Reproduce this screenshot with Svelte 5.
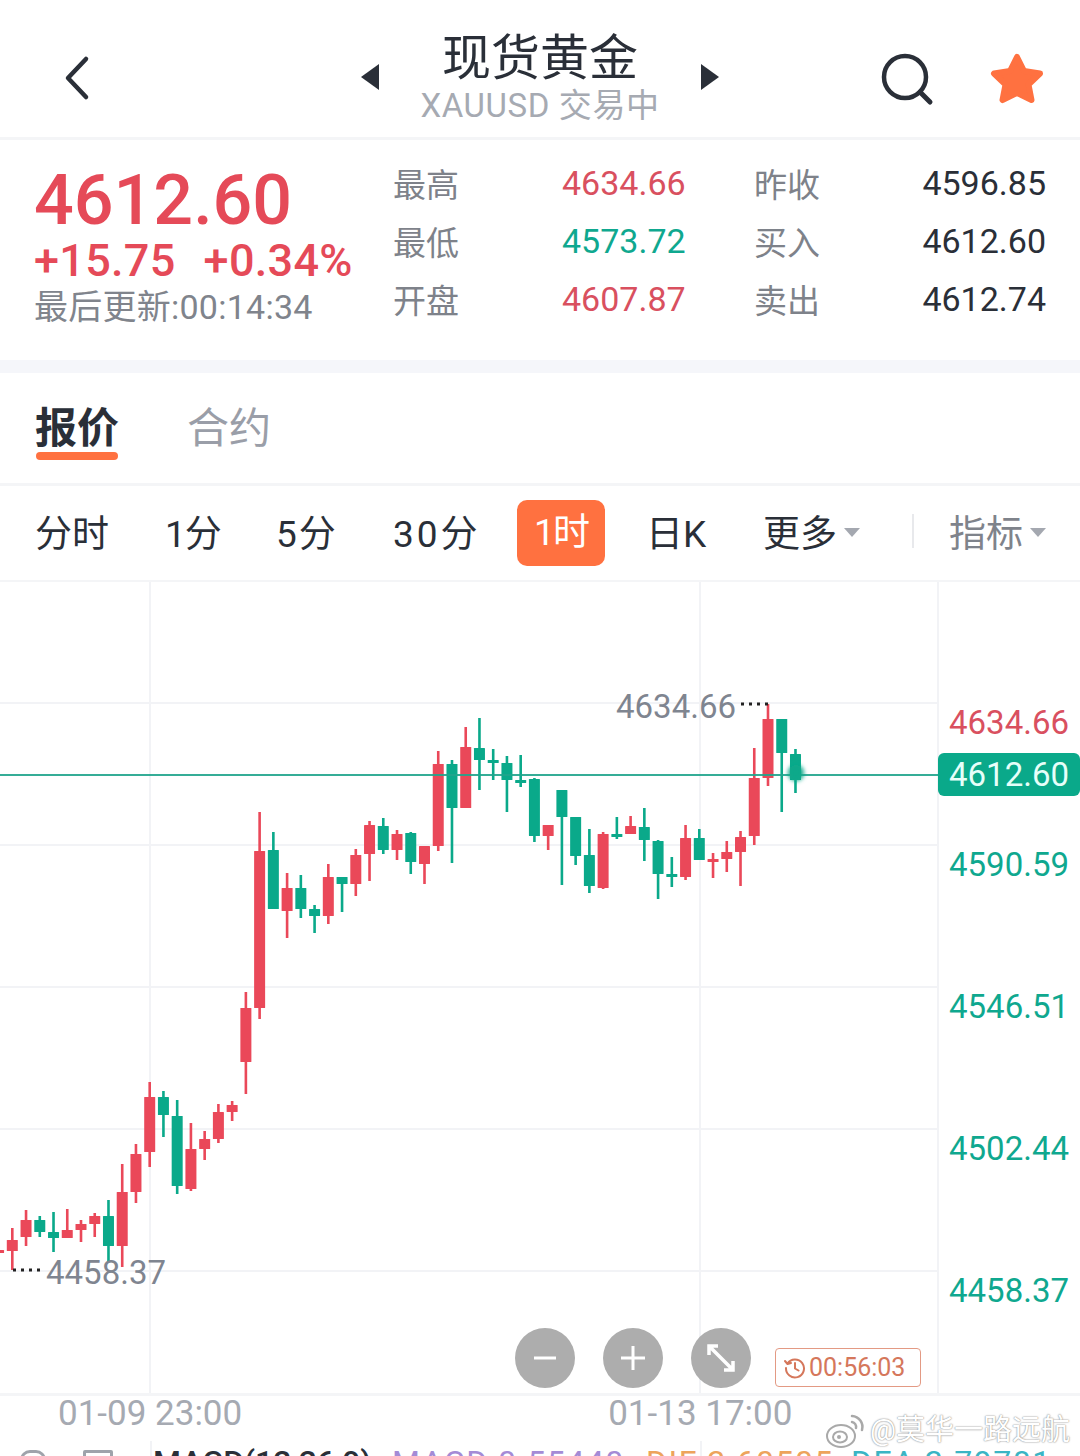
<script>
	const RED = '#ea4859';
	const GREEN = '#0aa98a';

	// r/g, high, bodyTop, bodyBottom, low -- page y coordinates
	const candles = [
		['r', 1240, 1250, 1252, 1256],
		['r', 1228, 1240, 1251, 1270],
		['r', 1210, 1220, 1237, 1246],
		['g', 1216, 1220, 1232, 1237],
		['g', 1212, 1232, 1238, 1252],
		['r', 1209, 1230, 1238, 1238],
		['r', 1220, 1224, 1230, 1242],
		['r', 1213, 1216, 1224, 1237],
		['g', 1200, 1216, 1246, 1262],
		['r', 1164, 1192, 1246, 1267],
		['r', 1144, 1154, 1192, 1203],
		['r', 1082, 1097, 1152, 1167],
		['g', 1091, 1097, 1115, 1137],
		['g', 1100, 1116, 1186, 1194],
		['r', 1123, 1149, 1189, 1191],
		['r', 1131, 1139, 1149, 1160],
		['r', 1104, 1112, 1139, 1143],
		['r', 1101, 1105, 1112, 1121],
		['r', 992, 1008, 1062, 1094],
		['r', 812, 851, 1008, 1019],
		['g', 832, 850, 909, 909],
		['r', 873, 888, 911, 938],
		['g', 875, 888, 909, 918],
		['g', 905, 909, 916, 933],
		['r', 864, 877, 916, 924],
		['g', 877, 877, 884, 912],
		['r', 849, 855, 884, 896],
		['r', 821, 825, 854, 881],
		['g', 818, 826, 850, 854],
		['r', 830, 834, 850, 860],
		['g', 832, 833, 862, 874],
		['r', 846, 846, 864, 884],
		['r', 751, 764, 846, 851],
		['g', 760, 764, 808, 863],
		['r', 727, 747, 808, 808],
		['g', 718, 748, 760, 790],
		['g', 749, 760, 762, 780],
		['g', 756, 763, 780, 812],
		['g', 755, 780, 782, 787],
		['g', 778, 779, 836, 842],
		['r', 825, 825, 836, 850],
		['g', 790, 790, 817, 885],
		['g', 817, 817, 856, 865],
		['g', 829, 855, 886, 893],
		['r', 832, 834, 888, 889],
		['g', 817, 834, 837, 839],
		['r', 816, 826, 834, 834],
		['g', 808, 827, 840, 861],
		['g', 840, 841, 874, 899],
		['g', 857, 874, 877, 887],
		['r', 825, 838, 877, 880],
		['g', 829, 838, 860, 860],
		['r', 853, 859, 861, 878],
		['r', 841, 852, 859, 872],
		['r', 831, 837, 852, 886],
		['r', 748, 778, 836, 845],
		['r', 704, 719, 778, 786],
		['g', 719, 719, 753, 812],
		['g', 749, 754, 780, 793]
	];

	const bars = candles.map(([c, high, top, bottom, low], i) => ({
		x: 12.3 + 13.74 * (i - 1),
		fill: c === 'r' ? RED : GREEN,
		high,
		top,
		bottom,
		low
	}));

	const hLines = [703, 845, 987, 1129, 1271];
	const vLines = [150, 700];
	const ticks = [
		{ y: 722, v: '4634.66', cls: 'up' },
		{ y: 864, v: '4590.59', cls: 'down' },
		{ y: 1006, v: '4546.51', cls: 'down' },
		{ y: 1148, v: '4502.44', cls: 'down' },
		{ y: 1290, v: '4458.37', cls: 'down' }
	];
	const stats = [
		['最高', '4634.66', 'up', '昨收', '4596.85'],
		['最低', '4573.72', 'down', '买入', '4612.60'],
		['开盘', '4607.87', 'up', '卖出', '4612.74']
	];
</script>

<div class="page">
	<header class="top">
		<div class="left">
			<svg width="30" height="46" viewBox="0 0 30 46">
				<path d="M24 4 L6 23 L24 42" fill="none" stroke="#2a2f38" stroke-width="4.5" stroke-linecap="round" stroke-linejoin="round" />
			</svg>
		</div>
		<div class="center">
			<span class="tri tri-l"></span>
			<div class="names">
				<div class="title">现货黄金</div>
				<div class="sub">XAUUSD 交易中</div>
			</div>
			<span class="tri tri-r"></span>
		</div>
		<div class="right">
			<svg class="search" width="56" height="56" viewBox="0 0 56 56">
				<circle cx="24" cy="24" r="21" fill="none" stroke="#2a2f38" stroke-width="4.5" />
				<path d="M39 39 L49 49" stroke="#2a2f38" stroke-width="5" stroke-linecap="round" />
			</svg>
			<svg width="56" height="54" viewBox="0 0 56 54">
				<path d="M28 5 L35 19 L51 21.500 L39.500 32.500 L42.500 48 L28 41 L13.500 48 L16.500 32.500 L5 21.500 L21 19 Z" fill="#ff7140" stroke="#ff7140" stroke-width="6" stroke-linejoin="round" />
			</svg>
		</div>
	</header>

	<section class="quote">
		<div class="price">
			<div class="last">4612.60</div>
			<div class="change"><span>+15.75</span><span>+0.34%</span></div>
			<div class="updated">最后更新:00:14:34</div>
		</div>
		<div class="stats">
			{#each stats as row}
				<span class="label">{row[0]}</span>
				<span class="val {row[2]}">{row[1]}</span>
				<span class="label">{row[3]}</span>
				<span class="val end">{row[4]}</span>
			{/each}
		</div>
	</section>

	<nav class="tabs">
		<a class="tab active">报价</a>
		<a class="tab">合约</a>
	</nav>

	<div class="periods">
		<span>分时</span>
		<span class="tight">1分</span>
		<span class="wide">5分</span>
		<span class="wider">30分</span>
		<span class="on">1时</span>
		<span>日K</span>
		<span class="more">更多<i class="caret"></i></span>
		<span class="sep"></span>
		<span class="more ind">指标<i class="caret"></i></span>
	</div>

	<div class="chart">
		<svg class="plot" width="1080" height="811" viewBox="0 582 1080 811">
			<defs>
				<filter id="glow" x="-100%" y="-100%" width="300%" height="300%">
					<feGaussianBlur stdDeviation="2" />
				</filter>
			</defs>
			{#each hLines as y}
				<line x1="0" x2="938" y1={y} y2={y} stroke="#f2f3f6" stroke-width="2" />
			{/each}
			{#each vLines as x}
				<line x1={x} x2={x} y1="582" y2="1393" stroke="#f2f3f6" stroke-width="2" />
			{/each}
			<line x1="938" x2="938" y1="582" y2="1393" stroke="#f2f3f6" stroke-width="2" />

			{#each bars as b}
				<rect x={b.x - 1.3} y={b.high} width="2.6" height={b.low - b.high} fill={b.fill} />
				<rect x={b.x - 5.5} y={b.top} width="11" height={Math.max(b.bottom - b.top, 3)} fill={b.fill} rx="0.5" />
			{/each}

			<line x1="0" x2="938" y1="775" y2="775" stroke="#1fa48c" stroke-opacity="0.9" stroke-width="2" />
			<circle cx="796" cy="773" r="8" fill="#0aa98a" filter="url(#glow)" />

			<text class="mark" x="616" y="718">4634.66</text>
			<line x1="741" x2="769" y1="704" y2="704" stroke="#222" stroke-width="3" stroke-dasharray="3 5" />
			<text class="mark" x="46" y="1284">4458.37</text>
			<line x1="13" x2="41" y1="1270" y2="1270" stroke="#222" stroke-width="3" stroke-dasharray="3 5" />

			{#each ticks as t}
				<text class="tick {t.cls}" x="949" y={t.y + 12}>{t.v}</text>
			{/each}
			<rect x="938" y="753" width="142" height="43" rx="6" fill="#0aa98a" />
			<text class="tick now" x="949" y="786">4612.60</text>
		</svg>

		<div class="tools">
			<button class="round" aria-label="缩小">
				<svg width="24" height="24" viewBox="0 0 24 24"><path d="M1 12 H23" stroke="#fff" stroke-width="3" /></svg>
			</button>
			<button class="round" aria-label="放大">
				<svg width="24" height="24" viewBox="0 0 24 24"><path d="M0 12 H24 M12 0 V24" stroke="#fff" stroke-width="3" /></svg>
			</button>
			<button class="round" aria-label="全屏">
				<svg width="32" height="32" viewBox="0 0 32 32">
					<path d="M4 4 L28 28 M4 13 V4 H13 M28 19 V28 H19" fill="none" stroke="#fff" stroke-width="3.500" />
				</svg>
			</button>
			<div class="timer">
				<svg width="22" height="22" viewBox="0 0 22 22">
					<path d="M3.500 6.500 A9 9 0 1 1 2 11 M1 4 L3.500 7 L7 6 M11 6 V11.500 L14.500 13.500" fill="none" stroke="#d5775b" stroke-width="2" stroke-linecap="round" stroke-linejoin="round" />
				</svg>
				<span>00:56:03</span>
			</div>
		</div>
	</div>

	<div class="axis">
		<span>01-09 23:00</span>
		<span>01-13 17:00</span>
	</div>

	<div class="macd">
		<span class="box box-a"></span>
		<span class="box box-b"></span>
		<span class="m-name">MACD(12,26,9)</span>
		<span class="m-a">MACD:0.55440</span>
		<span class="m-b">DIF:2.60505</span>
		<span class="m-c">DEA:2.79781</span>
	</div>

	<div class="mark-wb">
		<svg width="42" height="40" viewBox="0 0 42 40">
			<ellipse cx="16" cy="26" rx="14" ry="11" fill="#fff" stroke="#a9a9a9" stroke-width="2" />
			<ellipse cx="15" cy="27" rx="7" ry="5.500" fill="none" stroke="#a9a9a9" stroke-width="2" />
			<circle cx="14" cy="27" r="2" fill="#a9a9a9" />
			<path d="M27 6 A11 11 0 0 1 37 20 M27 12 A5 5 0 0 1 31 18" fill="none" stroke="#a9a9a9" stroke-width="2.500" stroke-linecap="round" />
		</svg>
		<span>@莫华一路远航</span>
	</div>
</div>

<style>
	:global(body) {
		margin: 0;
		background: #fff;
	}
	.page {
		position: relative;
		width: 1080px;
		height: 1456px;
		overflow: hidden;
		background: #fff;
		font-family: Roboto, 'Noto Sans CJK SC', sans-serif;
		color: #2a2f38;
	}

	.top {
		display: grid;
		grid-template-columns: 1fr auto 1fr;
		align-items: center;
		height: 137px;
		border-bottom: 3px solid #f4f5f7;
	}
	.left {
		display: flex;
		padding: 18px 0 0 62px;
	}
	.center {
		display: flex;
		align-items: center;
		gap: 41px;
	}
	.names {
		text-align: center;
		padding-top: 18px;
	}
	.title {
		font-size: 49px;
		line-height: 56px;
	}
	.sub {
		font-size: 33px;
		line-height: 38px;
		letter-spacing: 0.6px;
		color: #a6aab2;
	}
	.tri {
		width: 0;
		height: 0;
		margin-top: 16px;
		border-top: 13px solid transparent;
		border-bottom: 13px solid transparent;
	}
	.tri-l {
		border-right: 18px solid #2a2f38;
	}
	.tri-r {
		border-left: 18px solid #2a2f38;
	}
	.right {
		display: flex;
		align-items: center;
		justify-content: flex-end;
		gap: 52px;
		padding: 20px 35px 0 0;
	}
	.search {
		margin-top: 4px;
	}

	.quote {
		display: flex;
		height: 220px;
	}
	.price {
		width: 359px;
		box-sizing: border-box;
		padding: 20px 0 0 34px;
	}
	.last {
		font-size: 70px;
		line-height: 80px;
		font-weight: 500;
		color: #e54a58;
	}
	.change {
		display: flex;
		gap: 28px;
		margin-top: -1px;
		font-size: 45px;
		line-height: 44px;
		font-weight: 500;
		letter-spacing: 0.3px;
		color: #e54a58;
	}
	.updated {
		margin-top: 2px;
		font-size: 34px;
		line-height: 44px;
		letter-spacing: 0.25px;
		color: #80848c;
	}
	.stats {
		display: grid;
		grid-template-columns: 169px 192px 167px 125px;
		grid-auto-rows: 58px;
		align-items: center;
		margin: 16px 0 0 34px;
	}
	.label {
		margin-top: -4px;
		font-size: 33px;
		color: #7e828a;
	}
	.val {
		font-size: 34px;
		margin-top: -4px;
		color: #2a2f38;
	}
	.val.up {
		color: #d9505f;
	}
	.val.down {
		color: #0fa88f;
	}
	.val.end {
		text-align: right;
	}

	.tabs {
		display: flex;
		gap: 68px;
		height: 110px;
		padding-left: 35px;
		border-top: 13px solid #f5f6fa;
		border-bottom: 3px solid #f4f5f7;
	}
	.tab {
		position: relative;
		padding-top: 26px;
		font-size: 42px;
		line-height: 60px;
		color: #9a9ea8;
	}
	.tab.active {
		font-weight: 700;
		color: #2a2f38;
	}
	.tab.active::after {
		content: '';
		position: absolute;
		left: 1px;
		right: 1px;
		top: 79px;
		height: 8px;
		border-radius: 4px;
		background: #ff7140;
	}

	.periods {
		display: grid;
		grid-template-columns: 130px 111px 117px 124px 129px 117px 149px 37px auto;
		align-items: center;
		justify-items: start;
		box-sizing: border-box;
		height: 96px;
		padding: 0 0 4px 35px;
		border-bottom: 2px solid #f4f5f7;
		font-size: 37px;
		color: #2a2f38;
	}
	.tight {
		letter-spacing: -1px;
	}
	.wide {
		letter-spacing: 2px;
	}
	.wider {
		letter-spacing: 3px;
	}
	.periods .on {
		box-sizing: border-box;
		width: 88px;
		height: 66px;
		margin-top: 4px;
		line-height: 66px;
		text-align: center;
		letter-spacing: -2px;
		border-radius: 10px;
		background: #ff7140;
		color: #fff;
	}
	.more {
		display: flex;
		align-items: center;
		gap: 7px;
	}
	.ind {
		color: #7f838b;
	}
	.caret {
		width: 0;
		height: 0;
		margin-top: 2px;
		border-left: 8px solid transparent;
		border-right: 8px solid transparent;
		border-top: 9px solid #a4a8b0;
	}
	.sep {
		width: 2px;
		height: 34px;
		background: #e8e9ec;
	}

	.chart {
		position: relative;
		height: 811px;
		border-bottom: 3px solid #f4f5f7;
	}
	.plot {
		display: block;
	}
	.mark {
		font-size: 33px;
		fill: #7f8590;
	}
	.tick {
		font-size: 33px;
	}
	.tick.up {
		fill: #d9505f;
	}
	.tick.down {
		fill: #0fa88f;
	}
	.tick.now {
		fill: #e6fff9;
	}
	.tools {
		position: absolute;
		left: 515px;
		top: 746px;
		display: flex;
		align-items: flex-start;
		gap: 28px;
	}
	.round {
		display: flex;
		align-items: center;
		justify-content: center;
		width: 60px;
		height: 60px;
		padding: 0;
		border: none;
		border-radius: 50%;
		background: #adadad;
	}
	.timer {
		display: flex;
		align-items: center;
		gap: 3px;
		box-sizing: border-box;
		width: 146px;
		height: 39px;
		margin: 20px 0 0 -4px;
		padding-left: 8px;
		border: 1.500px solid #e39a84;
		border-radius: 4px;
		background: #fff;
		font-size: 25px;
		color: #d5775b;
	}

	.axis {
		display: flex;
		gap: 366px;
		padding-left: 58px;
		font-size: 35px;
		line-height: 36px;
		color: #a6aab2;
	}

	.macd {
		position: absolute;
		left: 0;
		top: 1441px;
		width: 1080px;
		height: 15px;
		overflow: hidden;
		font-size: 32px;
		line-height: 30px;
		white-space: nowrap;
	}
	.macd::before,
	.macd::after {
		content: '';
		position: absolute;
		top: 0;
		bottom: 0;
		width: 2px;
		background: #f2f3f6;
	}
	.macd::before {
		left: 150px;
	}
	.macd::after {
		left: 700px;
	}
	.macd span {
		position: absolute;
		top: 6px;
	}
	.macd .box {
		top: 9px;
		height: 20px;
		box-sizing: border-box;
		border: 3px solid #9fa3ab;
	}
	.box-a {
		left: 20px;
		width: 26px;
		border-radius: 10px;
	}
	.box-b {
		left: 83px;
		width: 30px;
		border-radius: 2px;
	}
	.m-name {
		left: 153px;
		color: #2a2f38;
		font-weight: 500;
	}
	.m-a {
		left: 392px;
		letter-spacing: 1.5px;
		color: #a48bd6;
	}
	.m-b {
		left: 646px;
		letter-spacing: 1.5px;
		color: #eda45c;
	}
	.m-c {
		left: 851px;
		letter-spacing: 1.5px;
		color: #3bb5c4;
	}

	.mark-wb {
		position: absolute;
		left: 825px;
		top: 1410px;
		display: flex;
		align-items: center;
		gap: 3px;
		font-size: 29px;
		line-height: 40px;
		color: #fff;
		text-shadow:
			0 0 1px #8f8f8f,
			0 0 2px #9a9a9a;
	}
</style>
